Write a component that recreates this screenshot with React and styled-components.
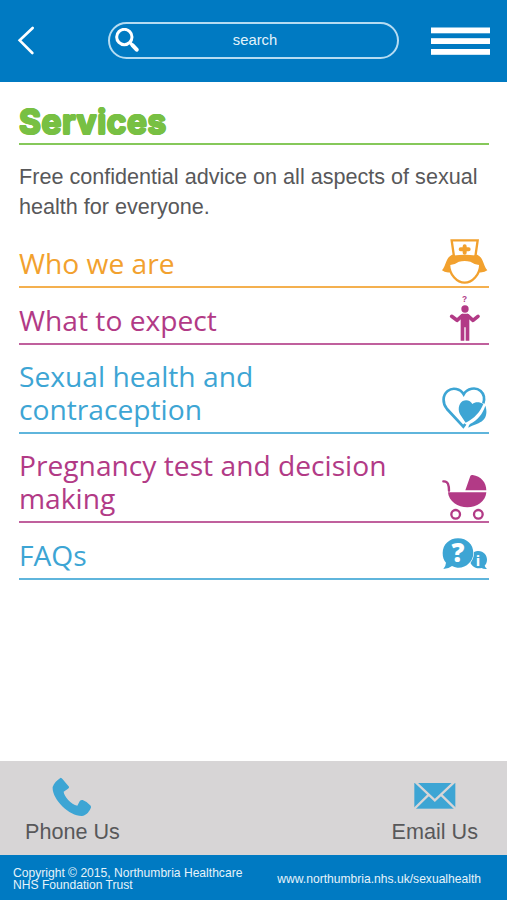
import React from "react";
import styled, { createGlobalStyle } from "styled-components";

const GlobalStyle = createGlobalStyle`
  * {
    box-sizing: border-box;
  }
  body {
    margin: 0;
    background: #fff;
    font-family: "Liberation Sans", Arial, sans-serif;
  }
`;

const colors = {
  blue: "#007ac2",
  sky: "#3da5d4",
  orange: "#f2a12e",
  pink: "#b23a86",
  green: "#78c043",
  grey: "#d7d5d6",
  text: "#58585a",
};

const Page = styled.div`
  width: 100%;
  height: 900px;
  display: flex;
  flex-direction: column;
  background: #fff;
`;

const Header = styled.header`
  height: 82px;
  flex-shrink: 0;
  display: flex;
  align-items: center;
  justify-content: space-between;
  padding: 0 17px 1px 17px;
  background: ${colors.blue};
`;

const IconButton = styled.button`
  display: flex;
  padding: 0;
  border: 0;
  background: none;
  cursor: pointer;
`;

const SearchBox = styled.div`
  width: 291px;
  height: 37px;
  margin-left: 53px;
  margin-right: 12px;
  padding: 0 5px 2px 5px;
  display: grid;
  grid-template-columns: 24px 1fr 22px;
  align-items: center;
  border: 2px solid #b5dcf2;
  border-radius: 19px;
`;

const SearchText = styled.span`
  padding-left: 1px;
  color: #e3f3fb;
  font-size: 14.8px;
  line-height: 18px;
  text-align: center;
`;

const Main = styled.main`
  flex: 1;
  padding: 0 18px 0 19px;
`;

/* stacked shadows fatten the letters and round their corners */
const Title = styled.h1`
  height: 63px;
  margin: 0;
  padding: 19px 0 0 0;
  border-bottom: 2px solid #86c85a;
  color: ${colors.green};
  font-family: Inter, sans-serif;
  font-size: 33.5px;
  font-weight: 700;
  line-height: 43px;
  letter-spacing: 0.5px;
  text-shadow:
    1px 0 ${colors.green},
    -1px 0 ${colors.green},
    0 0.8px ${colors.green},
    0 -0.8px ${colors.green},
    0.7px 0.6px ${colors.green},
    -0.7px -0.6px ${colors.green},
    0.7px -0.6px ${colors.green},
    -0.7px 0.6px ${colors.green};
`;

const Intro = styled.p`
  height: 86px;
  margin: 0;
  padding-top: 17px;
  color: ${colors.text};
  font-size: 21.6px;
  line-height: 30px;
`;

const Row = styled.a`
  height: ${(props) => props.$height}px;
  display: flex;
  align-items: flex-end;
  justify-content: space-between;
  border-bottom: 2px solid ${(props) => props.$line};
  color: ${(props) => props.$color};
  cursor: pointer;
`;

const Label = styled.span`
  width: 375px;
  padding-bottom: 7px;
  font-family: "Open Sans", sans-serif;
  font-size: 28.2px;
  line-height: 32.4px;
`;

const Contact = styled.section`
  height: 94px;
  flex-shrink: 0;
  display: flex;
  justify-content: space-between;
  padding: 0 29px 0 25px;
  background: ${colors.grey};
`;

const ContactItem = styled.a`
  display: flex;
  flex-direction: column;
  align-items: center;
  padding-top: 16px;
  color: ${colors.text};
  font-size: 21.6px;
  line-height: 26px;
  cursor: pointer;

  svg {
    margin-bottom: 2px;
  }
`;

const Footer = styled.footer`
  height: 45px;
  flex-shrink: 0;
  display: flex;
  justify-content: space-between;
  align-items: center;
  padding: 2px 26px 0 13px;
  background: ${colors.blue};
  color: #e6f3fa;
  font-size: 12.1px;
  line-height: 12px;
`;

const Copyright = styled.div`
  width: 240px;
`;

const BackIcon = () => (
  <svg width="18" height="30" viewBox="51 78 54 90" fill="none">
    <path d="M98 84 L59 121 L97 159" stroke="#fff" strokeWidth="8" strokeLinecap="round" />
  </svg>
);

const SearchIcon = () => (
  <svg width="24" height="24" viewBox="344 82 72 72" fill="none" stroke="#fff">
    <circle cx="372" cy="109" r="23" strokeWidth="9" />
    <path d="M389 126 L397 134" strokeWidth="9" />
    <path d="M397 134 L409 147" strokeWidth="12" strokeLinecap="round" />
  </svg>
);

const MenuIcon = () => (
  <svg width="59" height="28" viewBox="0 0 59 28" fill="#fff">
    <rect y="0.5" width="59" height="5.8" />
    <rect y="11.2" width="59" height="5.8" />
    <rect y="22" width="59" height="5.8" />
  </svg>
);

const NurseIcon = () => (
  <svg width="48" height="48" viewBox="33 24 144 144" fill="currentColor">
    <path d="M66 74 C46 84 50 104 36 121 Q44 129 61 127 L90 92 H118 L148 127 Q164 128 172 121 C158 104 162 84 142 74 Z" />
    <path
      d="M57 101 C58 136 82 158 104 158 C126 158 150 136 151 101 C140 102 130 98 122 92 Q104 87 86 92 C78 98 68 102 57 101 Z"
      fill="#fff"
      stroke="currentColor"
      strokeWidth="7"
    />
    <path
      d="M65 31 H143 L136 80 Q104 75 72 80 Z"
      fill="#fff"
      stroke="currentColor"
      strokeWidth="7"
    />
    <path
      d="M104 49 V68 M92 58 H116"
      stroke="currentColor"
      strokeWidth="12"
      strokeLinecap="round"
    />
  </svg>
);

const PersonIcon = () => (
  <svg width="48" height="48" viewBox="33 21 144 144" fill="currentColor">
    <text
      x="104"
      y="43"
      textAnchor="middle"
      fontFamily="Liberation Sans, sans-serif"
      fontSize="25"
      fontWeight="700"
    >
      ?
    </text>
    <circle cx="105" cy="63" r="11" />
    <path d="M97 77 H113 Q119 78 118 86 V158 H107 V118 H103 V158 H92 V86 Q91 78 97 77 Z" />
    <path
      d="M97 83 L81 97 L65 85 M113 83 L129 97 L144 85"
      fill="none"
      stroke="currentColor"
      strokeWidth="11"
      strokeLinejoin="round"
      strokeLinecap="round"
    />
  </svg>
);

const HeartIcon = () => (
  <svg width="48" height="46" viewBox="33 24 144 138" fill="currentColor">
    <path
      d="M106 138 L100 146 L51 93 C37 76 37 52 53 39 C68 27 91 32 101 49 C111 31 137 26 152 39 C163 49 164 63 160 76"
      fill="none"
      stroke="currentColor"
      strokeWidth="8"
    />
    <path d="M107 134 L91 110 C83 98 85 77 98 69 C110 63 122 68 127 78 C135 71 149 71 160 78 C151 101 134 121 107 134 Z" />
    <path d="M115 149 C116 143 117 141 120 138 C143 126 158 108 166 83 C172 100 170 116 159 127 C149 137 134 139 115 149 Z" />
  </svg>
);

const PramIcon = () => (
  <svg width="48" height="48" viewBox="33 21 144 144" fill="currentColor">
    <path
      d="M40 46 Q51 45 54 54 Q57 61 57 74"
      fill="none"
      stroke="currentColor"
      strokeWidth="7"
      strokeLinecap="round"
    />
    <path d="M106 73 L121 30 Q123 26 128 27 C153 31 169 49 169 73 Z" />
    <path d="M54 79 H169 C167 106 140 124 112 124 C84 124 56 107 54 79 Z" />
    <g fill="none" stroke="currentColor" strokeWidth="7">
      <circle cx="77" cy="145" r="13" />
      <circle cx="145" cy="145" r="13" />
    </g>
  </svg>
);

const FaqIcon = () => (
  <svg width="48" height="48" viewBox="33 0 144 144" fill="currentColor">
    <path d="M143 63 C161 62 171 76 171 89 C171 96 168 103 164 107 Q166 113 171 117 Q161 118 154 114 C138 118 120 108 120 89 C120 75 130 63 143 63 Z" />
    <path
      d="M84 25 C111 25 130 44 130 69 C130 94 108 115 82 113 Q73 112 66 108 Q55 117 40 117 Q47 110 48 98 C41 91 38 82 38 69 C38 44 58 25 84 25 Z"
      stroke="#fff"
      strokeWidth="4"
      paintOrder="stroke"
    />
    <g fill="#fff" fontFamily="Open Sans, sans-serif" fontWeight="800" textAnchor="middle">
      <text x="84" y="97" fontSize="77">
        ?
      </text>
      <text x="144" y="107" fontSize="44" fontWeight="700">
        i
      </text>
    </g>
  </svg>
);

const PhoneIcon = () => (
  <svg width="40" height="40" viewBox="155 66 120 120" fill={colors.sky}>
    <path d="M181 68 Q184 68 187 73 L206 95 Q207 99 203 101 L190 110 C190 122 213 149 231 152 L238 139 Q241 134 247 135 Q261 140 271 152 Q273 156 271 160 C265 174 255 182 245 183 C207 184 154 132 157 96 C161 84 170 75 181 68 Z" />
  </svg>
);

const MailIcon = () => (
  <svg width="42" height="40" viewBox="481 66 126 120">
    <rect x="482" y="84" width="123" height="77" fill={colors.sky} />
    <path
      d="M483 79 L543.5 136 L604 79 M480 163 L523 121 M607 163 L564 121"
      fill="none"
      stroke={colors.grey}
      strokeWidth="7"
    />
  </svg>
);

const services = [
  { label: "Who we are", height: 57, color: colors.orange, line: "#f4b04f", icon: NurseIcon },
  { label: "What to expect", height: 57, color: colors.pink, line: "#c0609d", icon: PersonIcon },
  {
    label: "Sexual health and contraception",
    height: 89,
    color: colors.sky,
    line: "#5fb5dc",
    icon: HeartIcon,
  },
  {
    label: "Pregnancy test and decision making",
    height: 89,
    color: colors.pink,
    line: "#c0609d",
    icon: PramIcon,
  },
  { label: "FAQs", height: 57, color: colors.sky, line: "#5fb5dc", icon: FaqIcon },
];

const TopBar = () => (
  <Header>
    <IconButton aria-label="Back">
      <BackIcon />
    </IconButton>
    <SearchBox>
      <SearchIcon />
      <SearchText>search</SearchText>
    </SearchBox>
    <IconButton aria-label="Menu">
      <MenuIcon />
    </IconButton>
  </Header>
);

const ServiceList = () => (
  <nav>
    {services.map(({ label, height, color, line, icon: Icon }) => (
      <Row key={label} $height={height} $color={color} $line={line}>
        <Label>{label}</Label>
        <Icon />
      </Row>
    ))}
  </nav>
);

const App = () => {
  return (
    <>
      <GlobalStyle />
      <Page>
        <TopBar />
        <Main>
          <Title>Services</Title>
          <Intro>Free confidential advice on all aspects of sexual health for everyone.</Intro>
          <ServiceList />
        </Main>
        <Contact>
          <ContactItem>
            <PhoneIcon />
            Phone Us
          </ContactItem>
          <ContactItem>
            <MailIcon />
            Email Us
          </ContactItem>
        </Contact>
        <Footer>
          <Copyright>Copyright © 2015, Northumbria Healthcare NHS Foundation Trust</Copyright>
          <span>www.northumbria.nhs.uk/sexualhealth</span>
        </Footer>
      </Page>
    </>
  );
};

export default App;
